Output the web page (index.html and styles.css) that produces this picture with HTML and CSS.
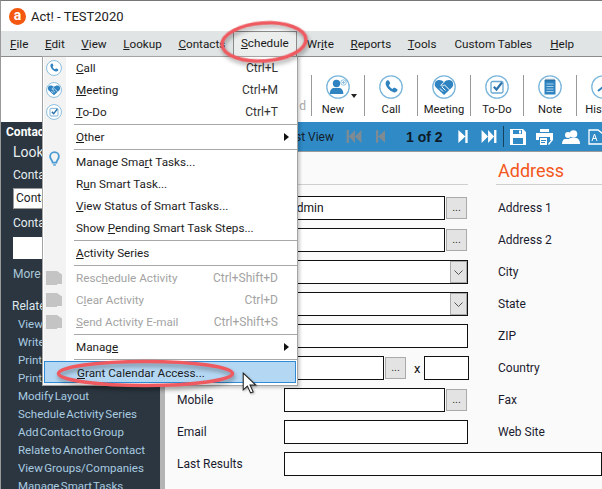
FILE: index.html
```html
<!DOCTYPE html>
<html lang="en">
<head>
<meta charset="utf-8">
<title>Act! - TEST2020</title>
<link rel="stylesheet" href="styles.css">
</head>
<body>
<svg class="defs" width="0" height="0">
  <symbol id="i-phone" viewBox="0 0 24 24"><circle cx="12" cy="12" r="11.200" fill="#fff" stroke="#7ab6dc" stroke-width="1.300"/><path fill="#2f83c0" d="M8 5.500c.8-.6 1.600-.4 2 .3l1 2c.3.6.2 1.100-.3 1.500l-.9.7c.6 1.600 2 3.200 3.700 4l.8-.9c.4-.5 1-.6 1.600-.3l2 1.100c.7.4.8 1.200.3 1.900-.9 1.300-2.200 1.900-3.700 1.400-3.700-1.200-7-4.500-7.800-7.900-.3-1.500.2-2.900 1.300-3.800z"/></symbol>
  <symbol id="i-meet" viewBox="0 0 24 24"><circle cx="12" cy="12" r="11.200" fill="#fff" stroke="#7ab6dc" stroke-width="1.300"/><path fill="#2f83c0" d="M12 20 3.800 12.300C1.800 9.800 2.800 5.800 6 5.200c2.200-.4 4.400.5 6 2 1.600-1.500 3.800-2.400 6-2 3.200.6 4.200 4.600 2.200 7.100z"/><path fill="none" stroke="#fff" stroke-width="1" d="M12 7.200 8.800 10.400c1 1 2.700.5 3.700-.5l5 5M8 13.500l3 3M10 12l3.500 3.500"/></symbol>
  <symbol id="i-todo" viewBox="0 0 24 24"><circle cx="12" cy="12" r="11.200" fill="#fff" stroke="#7ab6dc" stroke-width="1.300"/><rect x="6" y="6.500" width="12" height="11.500" rx="1.500" fill="none" stroke="#6aa9d4" stroke-width="1.300"/><path fill="none" stroke="#2f74aa" stroke-width="2.200" d="m8.800 11.800 2.700 2.700 5.500-7"/></symbol>
  <symbol id="i-note" viewBox="0 0 24 24"><circle cx="12" cy="12" r="11.200" fill="#fff" stroke="#7ab6dc" stroke-width="1.300"/><rect x="6.500" y="5" width="11" height="14.500" fill="#2f83c0"/><path fill="none" stroke="#a8d0ea" stroke-width="1" d="M8.500 9h7M8.500 11.500h7M8.500 14h7M8.500 16.500h7"/><path fill="none" stroke="#1f5f91" stroke-width="1" d="M8 3.800v2.400M10 3.800v2.400M12 3.800v2.400M14 3.800v2.400M16 3.800v2.400"/></symbol>
  <symbol id="i-new" viewBox="0 0 24 24"><circle cx="12" cy="12" r="11.200" fill="#fff" stroke="#7ab6dc" stroke-width="1.300"/><circle cx="10.500" cy="8.500" r="3.700" fill="#2f83c0"/><path fill="#2f83c0" d="M3.800 19c0-4.200 2-6 4.500-6h4.500c2.500 0 4.500 1.800 4.500 6z"/><circle cx="17.500" cy="7.500" r="2.700" fill="#fff" stroke="#7ab6dc" stroke-width=".8"/><path stroke="#7ab6dc" stroke-width=".8" d="M16 7.500h3M17.500 6v3"/></symbol>
  <symbol id="i-hist" viewBox="0 0 24 24"><circle cx="12" cy="12" r="11.200" fill="#fff" stroke="#7ab6dc" stroke-width="1.300"/><path fill="none" stroke="#2f83c0" stroke-width="2" d="M12 6v6l-5 4"/></symbol>
  <symbol id="i-blank" viewBox="0 0 16 16"><path fill="#c4c4c4" d="M0 1h11l5 3.500v9.500h-5v1H0z"/></symbol>
</svg>

<div class="window">
  <header class="titlebar">
    <span class="logo">a</span>
    <span class="title">Act! - TEST2020</span>
  </header>

  <nav class="menubar">
    <span class="mi"><u>F</u>ile</span>
    <span class="mi"><u>E</u>dit</span>
    <span class="mi"><u>V</u>iew</span>
    <span class="mi"><u>L</u>ookup</span>
    <span class="mi mi-contacts"><u>C</u>ontacts</span>
    <span class="mi mi-open"><u>S</u>chedule</span>
    <span class="mi">Wr<u>i</u>te</span>
    <span class="mi"><u>R</u>eports</span>
    <span class="mi mi-wide"><u>T</u>ools</span>
    <span class="mi mi-wide">Custom Tables</span>
    <span class="mi"><u>H</u>elp</span>
  </nav>

  <section class="toolbar">
    <div class="tool-stub">d</div>
    <div class="tool tool-new">
      <svg class="tool-icon"><use href="#i-new"/></svg>
      <span class="caret"></span>
      <span class="tool-label">New</span>
    </div>
    <div class="tool"><svg class="tool-icon"><use href="#i-phone"/></svg><span class="tool-label">Call</span></div>
    <div class="tool"><svg class="tool-icon"><use href="#i-meet"/></svg><span class="tool-label">Meeting</span></div>
    <div class="tool"><svg class="tool-icon"><use href="#i-todo"/></svg><span class="tool-label">To-Do</span></div>
    <div class="tool"><svg class="tool-icon"><use href="#i-note"/></svg><span class="tool-label">Note</span></div>
    <div class="tool"><svg class="tool-icon"><use href="#i-hist"/></svg><span class="tool-label">History</span></div>
  </section>

  <div class="main">
    <aside class="sidebar">
      <h2 class="side-title">Contacts</h2>
      <div class="side-h">Lookup</div>
      <div class="side-l">Contact</div>
      <div class="side-box side-input">Contact</div>
      <div class="side-l side-l2">Contact</div>
      <div class="side-box side-blank"></div>
      <div class="side-more">More</div>
      <div class="side-rel">Related</div>
      <ul class="side-list">
        <li>View</li>
        <li>Write</li>
        <li>Print</li>
        <li>Print</li>
        <li>Modify Layout</li>
        <li>Schedule Activity Series</li>
        <li>Add Contact to Group</li>
        <li>Relate to Another Contact</li>
        <li>View Groups/Companies</li>
        <li>Manage Smart Tasks</li>
      </ul>
    </aside>
    <div class="splitter"></div>
    <div class="pane">
      <section class="navbar">
        <span class="nav-view">List View</span>
        <svg class="nav-btn nav-first" viewBox="0 0 16 14"><path fill="#7f8b93" d="M0 0h2.500v14H0zM9 0v14L2.500 7zM16 0v14L9 7z"/></svg>
        <svg class="nav-btn nav-prev" viewBox="0 0 10 14"><path fill="#7f8b93" d="M0 0h2.500v14H0zM10 0v14L2.500 7z"/></svg>
        <span class="nav-count">1 of 2</span>
        <svg class="nav-btn nav-next" viewBox="0 0 10 14"><path fill="#fff" d="M10 0H7.500v14H10zM0 0v14l7.500-7z"/></svg>
        <svg class="nav-btn nav-last" viewBox="0 0 16 14"><path fill="#fff" d="M16 0h-2.500v14H16zM7 0v14l6.500-7zM0 0v14l7-7z"/></svg>
        <span class="nav-sep"></span>
        <svg class="nav-act nav-save" viewBox="0 0 16 16"><path fill="#fff" fill-rule="evenodd" d="M0 0h13l3 3v13H0zM3 1v4h9V1zM9 1.500h2v3H9zM3 9v6h10V9z"/></svg>
        <svg class="nav-act nav-print" viewBox="0 0 17 16"><path fill="#fff" d="M4 0h9v3H4zM0 4h17v7h-3V8H3v3H0zM4 9h7v7H4z"/><path fill="#2f8ac6" d="M5 11h5v1H5zM5 13h4v1H5z"/><path fill="#fff" d="m12 15 4-5 1 1-4 5z"/></svg>
        <svg class="nav-act nav-people" viewBox="0 0 18 14"><circle cx="11.500" cy="4" r="3.800" fill="#fff"/><path fill="#fff" d="M5 14c0-4 2-5.500 3.500-6h6c1.500.5 3.500 2 3.500 6z"/><circle cx="6" cy="5" r="3" fill="#fff"/><path fill="#fff" d="M0 14c0-3 1.500-5 3-5h4v5z"/></svg>
        <svg class="nav-act nav-doc" viewBox="0 0 16 16"><path fill="none" stroke="#fff" stroke-width="1.300" d="M1 1h9l5 4v10H1z"/><path fill="none" stroke="#fff" d="m4 12 2.500-7 2.500 7M5 9.500h3"/></svg>
      </section>
      <main class="content">
        <div class="heads">
          <div class="head head-left"></div>
          <h3 class="head head-right">Address</h3>
        </div>
        <div class="form">
          <span class="lbl"></span>
          <div class="field"><span class="inp inp-text">Admin</span><span class="more">...</span></div>
          <span class="rlbl">Address 1</span>

          <span class="lbl"></span>
          <div class="field"><span class="inp"></span><span class="more">...</span></div>
          <span class="rlbl">Address 2</span>

          <span class="lbl"></span>
          <div class="field"><span class="inp inp-sel"><span class="chev"><svg width="9" height="5" viewBox="0 0 9 5"><path fill="none" stroke="#555" d="m.5.5 4 4 4-4"/></svg></span></span></div>
          <span class="rlbl">City</span>

          <span class="lbl"></span>
          <div class="field"><span class="inp inp-sel"><span class="chev"><svg width="9" height="5" viewBox="0 0 9 5"><path fill="none" stroke="#555" d="m.5.5 4 4 4-4"/></svg></span></span></div>
          <span class="rlbl">State</span>

          <span class="lbl"></span>
          <div class="field"><span class="inp"></span></div>
          <span class="rlbl">ZIP</span>

          <span class="lbl"></span>
          <div class="field"><span class="inp inp-phone"></span><span class="more">...</span><span class="ext-x">x</span><span class="inp inp-ext"></span></div>
          <span class="rlbl">Country</span>

          <span class="lbl">Mobile</span>
          <div class="field"><span class="inp"></span><span class="more">...</span></div>
          <span class="rlbl">Fax</span>

          <span class="lbl">Email</span>
          <div class="field"><span class="inp"></span></div>
          <span class="rlbl">Web Site</span>

          <span class="lbl">Last Results</span>
          <div class="field field-wide"><span class="inp"></span></div>
        </div>
      </main>
    </div>
  </div>

  <div class="menu">
    <div class="item"><svg class="item-icon"><use href="#i-phone"/></svg><span class="it"><u>C</u>all</span><span class="key">Ctrl+L</span></div>
    <div class="item"><svg class="item-icon"><use href="#i-meet"/></svg><span class="it"><u>M</u>eeting</span><span class="key">Ctrl+M</span></div>
    <div class="item"><svg class="item-icon"><use href="#i-todo"/></svg><span class="it"><u>T</u>o-Do</span><span class="key">Ctrl+T</span></div>
    <div class="sep"></div>
    <div class="item"><span class="it"><u>O</u>ther</span><span class="arrow"></span></div>
    <div class="sep"></div>
    <div class="item"><svg class="item-bulb" viewBox="0 0 12 16"><path fill="none" stroke="#4a9bd4" stroke-width="2" d="M4 12.500C4 10 1.200 9 1.200 5.800a4.800 4.800 0 0 1 9.600 0C10.800 9 8 10 8 12.500z"/><path stroke="#4a9bd4" stroke-width="1.500" d="M4.500 15h3"/></svg><span class="it">Manage Sma<u>r</u>t Tasks...</span></div>
    <div class="item"><span class="it">R<u>u</u>n Smart Task...</span></div>
    <div class="item"><span class="it"><u>V</u>iew Status of Smart Tasks...</span></div>
    <div class="item"><span class="it">Show <u>P</u>ending Smart Task Steps...</span></div>
    <div class="sep"></div>
    <div class="item"><span class="it"><u>A</u>ctivity Series</span></div>
    <div class="sep"></div>
    <div class="item off"><svg class="item-icon"><use href="#i-blank"/></svg><span class="it">Resc<u>h</u>edule Activity</span><span class="key">Ctrl+Shift+D</span></div>
    <div class="item off"><svg class="item-icon"><use href="#i-blank"/></svg><span class="it">C<u>l</u>ear Activity</span><span class="key">Ctrl+D</span></div>
    <div class="item off"><svg class="item-icon"><use href="#i-blank"/></svg><span class="it"><u>S</u>end Activity E-mail</span><span class="key">Ctrl+Shift+S</span></div>
    <div class="sep"></div>
    <div class="item"><span class="it">Manag<u>e</u></span><span class="arrow"></span></div>
    <div class="sep"></div>
    <div class="item hot"><span class="it"><u>G</u>rant Calendar Access...</span></div>
  </div>

  <svg class="callouts" viewBox="0 0 602 489">
    <ellipse class="ring" cx="264" cy="42" rx="42" ry="19" transform="rotate(-4 264 42)"/>
    <ellipse class="ring" cx="145.500" cy="373.500" rx="87" ry="12"/>
  </svg>
  <svg class="cursor" viewBox="0 0 14 22"><path fill="#fff" stroke="#222" d="M1 1v16l4-3.500 3 6.500 2.500-1-3-6.500H13z"/></svg>
</div>
</body>
</html>
```

FILE: styles.css
```css
* { box-sizing: border-box; }
html, body { margin: 0; padding: 0; }
body { width: 602px; height: 489px; overflow: hidden; font-family: Roboto, "Open Sans", sans-serif; font-size: 12px; color: #111; background: #fff; }
.defs { position: absolute; }
.window { position: relative; width: 602px; height: 489px; overflow: hidden; display: flex; flex-direction: column; border-top: 1px solid #777; border-left: 1px solid #999; }

.titlebar { height: 30px; display: flex; align-items: center; padding-left: 8px; background: #fff; flex: none; }
.logo { width: 17px; height: 17px; border-radius: 50%; background: #f4570f; color: #fff; font-weight: 700; font-size: 14px; line-height: 15px; text-align: center; }
.title { margin-left: 5px; font-size: 13px; color: #222; }

.menubar { height: 26px; flex: none; display: flex; align-items: center; padding-left: 9px; background: #e0e4e4; border-bottom: 1px solid #8c8c8c; font-size: 11.700px; }
.mi { margin-right: 16.600px; color: #1a1a1a; white-space: nowrap; }
.mi-wide { margin-right: 18px; }
.mi-contacts { width: 45.400px; margin-right: 9px; }
.mi-open { align-self: flex-end; height: 25px; width: 64px; margin-right: 10px; background: #eceeee; border: 1px solid #8a8a8a; border-bottom: 0; line-height: 23px; text-align: center; }

.toolbar { height: 65px; flex: none; display: flex; align-items: flex-start; padding-top: 18px; background: #fff; overflow: hidden; }
.tool-stub { width: 310px; flex: none; height: 41px; text-align: right; padding: 23px 5px 0 0; color: #aaa; line-height: 16px; }
.tool { position: relative; width: 53px; height: 41px; flex: none; display: flex; flex-direction: column; align-items: center; border-left: 1px solid #999; }
.tool-icon { width: 24px; height: 24px; display: block; flex: none; }
.tool-label { line-height: 16px; margin-top: 3px; white-space: nowrap; color: #1a1a1a; font-size: 11.200px; flex: none; }
.tool-new .tool-label { margin-right: 10px; }
.caret { position: absolute; left: 39px; top: 19px; border: 4px solid transparent; border-top-color: #222; border-bottom: 0; border-left-width: 3.500px; border-right-width: 3.500px; }

.main { flex: 1; min-height: 0; display: flex; }
.sidebar { width: 159px; flex: none; background: #2b3640; color: #fff; overflow: hidden; white-space: nowrap; padding-left: 5px; }
.side-title { margin: 2px 0 0; font-size: 12px; font-weight: 700; line-height: 16px; }
.side-h { margin: 2px 0 0 7px; font-size: 14px; line-height: 20px; color: #e8edf0; }
.side-l { margin: 4px 0 0 7px; line-height: 18px; color: #e8edf0; }
.side-l2 { margin-top: 5px; }
.side-box { margin: 4px 0 0 7px; width: 130px; background: #fff; }
.side-input { height: 21px; border: 1px solid #999; color: #222; line-height: 19px; padding-left: 2px; }
.side-blank { height: 22px; margin-top: 5px; }
.side-more { margin: 6px 0 0 7px; line-height: 18px; color: #a9c6d8; }
.side-rel { margin: 14px 0 0 6px; line-height: 18px; color: #dfe8ee; }
.side-list { list-style: none; margin: 0; padding: 0 0 0 12px; color: #a9cbe0; font-size: 11.500px; word-spacing: -1.500px; }
.side-list li { height: 18px; line-height: 18px; }

.splitter { width: 5px; flex: none; background: #b4b4b4; }
.pane { flex: 1; min-width: 0; display: flex; flex-direction: column; }
.navbar { height: 30px; flex: none; display: flex; align-items: center; background: #2f8ac6; border-bottom: 1px solid #9a9a9a; overflow: hidden; }
.nav-view { width: 181px; text-align: right; padding-right: 12px; white-space: nowrap; color: #14202a; flex: none; }
.nav-btn { height: 13px; display: block; flex: none; }
.nav-first { width: 16px; }
.nav-prev { width: 9px; margin-left: 14px; }
.nav-count { margin-left: 21px; width: 34px; flex: none; font-family: "Liberation Sans", Arial, sans-serif; font-weight: 700; font-size: 14px; color: #0d1c28; white-space: nowrap; }
.nav-next { width: 10px; margin-left: 18px; }
.nav-last { width: 16px; margin-left: 13px; }
.nav-sep { width: 1px; height: 21px; flex: none; background: #17425f; margin-left: 6px; }
.nav-act { flex: none; display: block; height: 16px; }
.nav-save { width: 16px; margin-left: 6px; }
.nav-print { width: 17px; margin-left: 10px; }
.nav-people { width: 18px; margin-left: 9px; height: 14px; }
.nav-doc { width: 16px; margin-left: 8px; }

.content { flex: 1; min-height: 0; background: #fafafa; overflow: hidden; }
.heads { display: flex; height: 33px; }
.head { margin: 0; font-weight: 400; border-bottom: 1px solid #cfcfcf; height: 33px; line-height: 38px; }
.head-left { width: 303px; flex: none; }
.head-right { flex: 1; margin-left: 28px; padding-left: 2px; font-size: 18px; color: #f2581b; }

.form { display: grid; grid-template-columns: 119px 184px 30px 1fr; grid-auto-rows: 24px; row-gap: 8px; margin-top: 11px; }
.lbl { padding-left: 12px; line-height: 24px; color: #1a1a2e; }
.rlbl { grid-column: 4; line-height: 24px; color: #1a1a2e; }
.field { grid-column: 2; display: flex; align-items: center; }
.field-wide { grid-column: 2 / 5; }
.inp { flex: 1; min-width: 0; height: 24px; border: 1px solid #111; background: #fff; display: block; position: relative; line-height: 22px; }
.inp-text { padding-left: 4px; }
.inp-phone { flex: none; width: 100px; }
.inp-ext { flex: none; width: 45px; }
.ext-x { width: 17px; padding-left: 7px; flex: none; font-size: 13px; }
.more { width: 21px; height: 22px; flex: none; margin: 0 1px; background: #e3e3e3; border: 1px solid #aaa; font-size: 11px; line-height: 20px; text-align: center; color: #333; }
.chev { position: absolute; right: 0; top: 0; width: 17px; height: 22px; background: #e3e3e3; border: 1px solid #aaa; display: flex; align-items: center; justify-content: center; }

.menu { position: absolute; left: 41px; top: 55px; width: 256px; height: 330px; background: #fff; border: 1px solid #a4a4a4; box-shadow: 2px 2px 3px rgba(0,0,0,.2); }
.menu::before { content: ""; position: absolute; left: 1px; top: 0; bottom: 0; width: 22px; background: #f3f3f3; }
.item { position: relative; height: 22px; display: flex; align-items: center; padding: 0 19px 0 33px; white-space: nowrap; color: #1c1c1c; }
.it { flex: 1; font-size: 11.700px; }
.key { color: #333; }
.item-icon { position: absolute; left: 3px; top: 3px; width: 16px; height: 16px; }
.item-bulb { position: absolute; left: 6px; top: 0; width: 11px; height: 15px; }
.off, .off .key { color: #a3a3a3; }
.sep { position: relative; height: 3px; margin-left: 31px; }
.sep::after { content: ""; position: absolute; left: 0; right: 0; top: 1px; height: 1px; background: #a8a8a8; }
.arrow { border-left: 5px solid #111; border-top: 4px solid transparent; border-bottom: 4px solid transparent; margin-right: -11px; }
.hot { margin: 0 1px; padding-left: 32px; padding-top: 1px; background: #b4d7f3; border: 1px solid #2f8bd6; }

.callouts { position: absolute; left: -1px; top: -1px; width: 602px; height: 489px; pointer-events: none; }
.ring { fill: none; stroke: #ee5a60; stroke-width: 3.500; filter: drop-shadow(1px 3px 2px rgba(0,0,0,.35)); }
.cursor { position: absolute; left: 241px; top: 371px; width: 15px; height: 23px; filter: drop-shadow(1px 1px 1px rgba(0,0,0,.3)); }
```
